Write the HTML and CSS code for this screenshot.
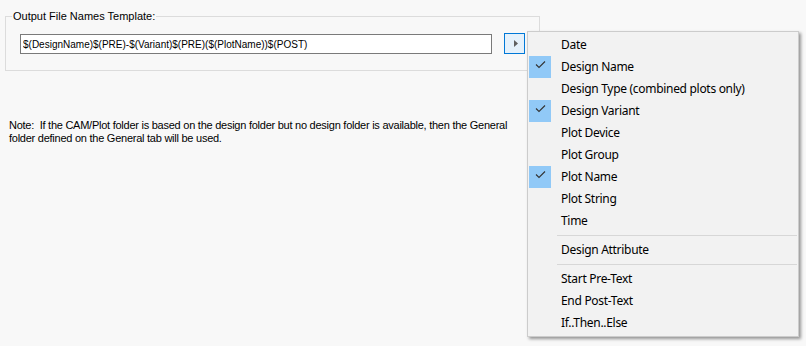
FILE: index.html
```html
<!DOCTYPE html>
<html>

<head>
    <meta charset="UTF-8">
    <meta name="viewport" content="width=device-width, initial-scale=1.0">
    <title>Output File Names</title>
    <link rel="stylesheet" href="styles.css">
</head>

<body>
    <fieldset class="group">
        <legend>Output File Names Template:</legend>
        <div class="template-row">
            <input type="text" class="template-input" value="$(DesignName)$(PRE)-$(Variant)$(PRE)($(PlotName))$(POST)">
            <button class="menu-btn">
                <svg width="19" height="19" viewBox="0 0 19 19"><polygon points="9,6 13,9.5 9,13" fill="#606060"/></svg>
            </button>
        </div>
    </fieldset>

    <p class="note">Note:&nbsp; If the CAM/Plot folder is based on the design folder but no design folder is available, then the General<br>folder defined on the General tab will be used.</p>

    <ul class="popup">
        <li class="item"><span class="slot"></span><span class="label">Date</span></li>
        <li class="item"><span class="slot checked"><svg width="22" height="22" viewBox="0 0 22 22"><polyline points="7,8.5 10,11.5 16,5.5" fill="none" stroke="#333" stroke-width="1.1"/></svg></span><span class="label">Design Name</span></li>
        <li class="item"><span class="slot"></span><span class="label">Design Type (combined plots only)</span></li>
        <li class="item"><span class="slot checked"><svg width="22" height="22" viewBox="0 0 22 22"><polyline points="7,8.5 10,11.5 16,5.5" fill="none" stroke="#333" stroke-width="1.1"/></svg></span><span class="label">Design Variant</span></li>
        <li class="item"><span class="slot"></span><span class="label">Plot Device</span></li>
        <li class="item"><span class="slot"></span><span class="label">Plot Group</span></li>
        <li class="item"><span class="slot checked"><svg width="22" height="22" viewBox="0 0 22 22"><polyline points="7,8.5 10,11.5 16,5.5" fill="none" stroke="#333" stroke-width="1.1"/></svg></span><span class="label">Plot Name</span></li>
        <li class="item"><span class="slot"></span><span class="label">Plot String</span></li>
        <li class="item"><span class="slot"></span><span class="label">Time</span></li>
        <li class="sep"></li>
        <li class="item"><span class="slot"></span><span class="label">Design Attribute</span></li>
        <li class="sep"></li>
        <li class="item"><span class="slot"></span><span class="label">Start Pre-Text</span></li>
        <li class="item"><span class="slot"></span><span class="label">End Post-Text</span></li>
        <li class="item"><span class="slot"></span><span class="label">If..Then..Else</span></li>
    </ul>
</body>

</html>
```

FILE: styles.css
```css
body {
    font-family: "Liberation Sans", Arial, sans-serif;
    font-size: 11px;
    margin: 0;
    padding: 10px 0 0 5px;
    background-color: #f8f8f8;
    color: #000;
    position: relative;
    height: 336px;
}

.group {
    width: 535px;
    margin: 0;
    padding: 0 0 16px 0;
    border: 1px solid #dcdcdc;
    box-sizing: border-box;
}

.group legend {
    margin-left: 6px;
    padding: 0 1px;
    line-height: 13px;
}

.template-row {
    display: flex;
    align-items: flex-start;
    margin: 10px 0 0 14px;
}

.template-input {
    width: 472px;
    height: 20px;
    margin-top: 1px;
    padding: 0 2px;
    box-sizing: border-box;
    border: 1px solid #7a7a7a;
    background: #fff;
    font-family: "Liberation Sans", Arial, sans-serif;
    font-size: 10px;
    color: #000;
    outline: none;
}

.menu-btn {
    width: 21px;
    height: 21px;
    margin-left: 12px;
    padding: 0;
    box-sizing: border-box;
    border: 1px solid #0078d7;
    background: #e5f1fb;
    display: flex;
    align-items: center;
    justify-content: center;
}

.note {
    margin: 48px 0 0 4px;
    line-height: 13px;
    letter-spacing: -0.25px;
}

.popup {
    position: absolute;
    left: 527px;
    top: 31px;
    width: 272px;
    margin: 0;
    padding: 2px 0;
    box-sizing: border-box;
    list-style: none;
    background: #f2f2f2;
    border: 1px solid #cccccc;
    box-shadow: 2px 2px 3px rgba(0, 0, 0, 0.4);
    font-family: "Noto Sans", "Segoe UI", sans-serif;
    font-size: 12px;
    letter-spacing: -0.3px;
}

.item {
    display: flex;
    align-items: center;
    height: 22px;
}

.slot {
    width: 22px;
    height: 22px;
    margin-left: 1px;
    flex-shrink: 0;
}

.slot.checked {
    background: #91c9f7;
}

.slot svg {
    display: block;
}

.label {
    margin-left: 10px;
    padding-bottom: 1px;
    white-space: nowrap;
}

.sep {
    height: 1px;
    margin: 3px 1px 3px 29px;
    background: #d7d7d7;
}
```
